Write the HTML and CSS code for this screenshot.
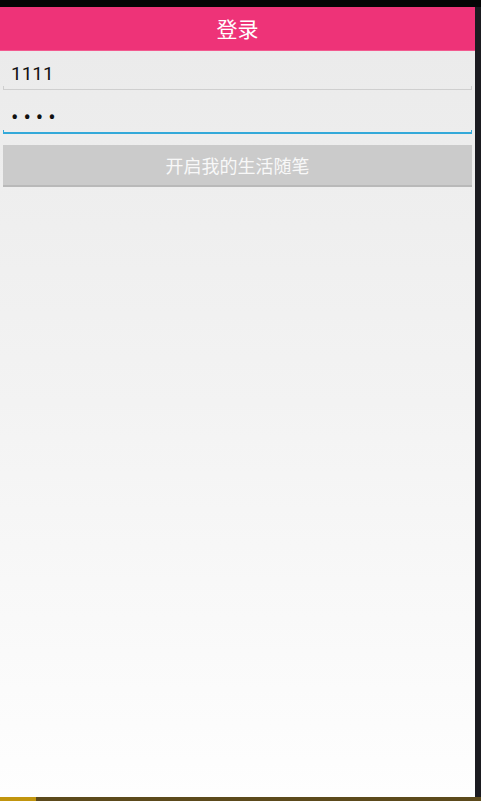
FILE: index.html
```html
<!DOCTYPE html>
<html lang="zh">
<head>
<meta charset="utf-8">
<title>登录</title>
<link rel="stylesheet" href="styles.css">
</head>
<body>
<div class="screen">
  <div class="statusbar"></div>
  <div class="middle">
    <div class="app">
      <div class="header">登录</div>
      <div class="form">
        <div class="field">
          <div class="value">1111</div>
          <div class="line"></div>
        </div>
        <div class="field focused">
          <div class="value dots">••••</div>
          <div class="line"></div>
        </div>
        <div class="button">开启我的生活随笔</div>
      </div>
    </div>
    <div class="edge"></div>
  </div>
  <div class="bottombar"><div class="progress"></div></div>
</div>
</body>
</html>
```
FILE: styles.css
```css
html, body {
  margin: 0;
  padding: 0;
  background: #000;
}
.screen {
  width: 481px;
  height: 801px;
  display: flex;
  flex-direction: column;
  font-family: "Noto Sans", Roboto, "Noto Sans CJK SC", sans-serif;
}
.statusbar {
  height: 7px;
  background: #050505;
}
.middle {
  flex: 1;
  display: flex;
}
.app {
  width: 475px;
  display: flex;
  flex-direction: column;
  background: linear-gradient(to bottom, #eaeaea 0%, #f3f3f3 50%, #fefefe 100%);
}
.edge {
  flex: 1;
  background: #1b1b20;
}
.header {
  height: 43px;
  border-bottom: 1px solid #f25a8f;
  background: #ee3378;
  color: #fff;
  font-family: "Noto Sans CJK SC", sans-serif;
  font-size: 21px;
  line-height: 43px;
  text-align: center;
}
.form {
  padding: 0 3px;
  display: flex;
  flex-direction: column;
}
.field {
  height: 44px;
  padding-top: 11px;
  box-sizing: border-box;
}
.value {
  height: 24px;
  line-height: 24px;
  padding-left: 8px;
  font-family: Roboto, "Noto Sans", sans-serif;
  font-size: 19px;
  color: #111;
}
.dots {
  padding-left: 8px;
  font-size: 22px;
  letter-spacing: 5px;
}
.line {
  height: 3px;
  border: 1px solid #cfcfcf;
  border-top: none;
}
.focused .line {
  height: 2px;
  border: 2px solid #33a9d9;
  border-top: none;
  border-left-width: 1px;
  border-right-width: 1px;
}
.button {
  margin-top: 6px;
  height: 40px;
  line-height: 40px;
  background: #cbcbcb;
  border-bottom: 2px solid #b9b9b9;
  color: #f8f8f8;
  font-family: "Noto Sans CJK SC", sans-serif;
  font-size: 18px;
  text-align: center;
}
.bottombar {
  height: 4px;
  background: #5c4a1c;
}
.progress {
  width: 36px;
  height: 4px;
  background: #c1950e;
}
```
